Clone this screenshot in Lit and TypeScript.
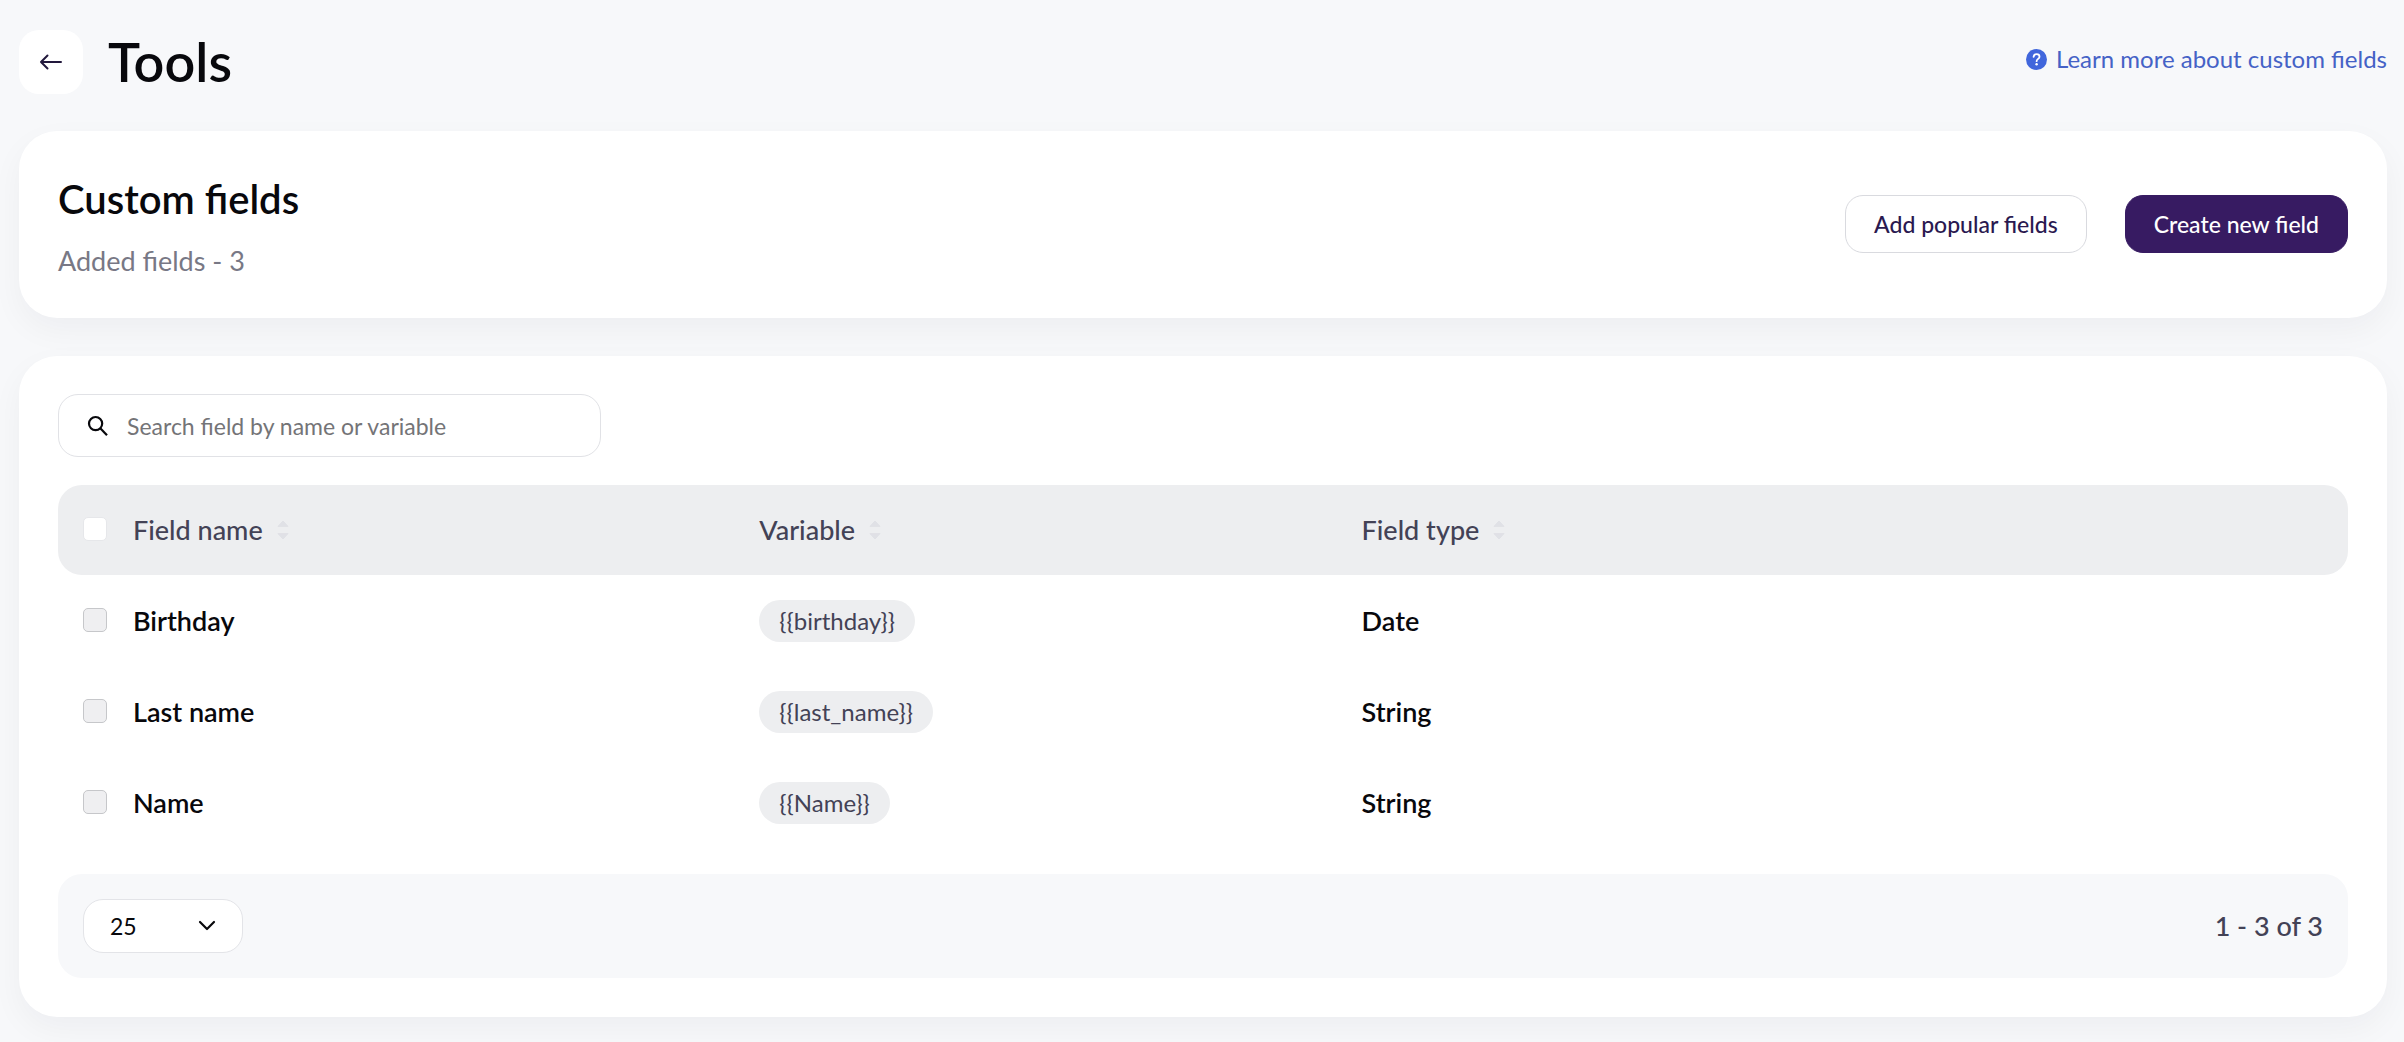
import { LitElement, html, css, svg } from "lit";
import { customElement, state } from "lit/decorators.js";

interface Field {
  name: string;
  variable: string;
  type: string;
}

const FIELDS: Field[] = [
  { name: "Birthday", variable: "{{birthday}}", type: "Date" },
  { name: "Last name", variable: "{{last_name}}", type: "String" },
  { name: "Name", variable: "{{Name}}", type: "String" },
];

const COLUMNS = ["Field name", "Variable", "Field type"];

const sortIcon = html`<svg class="sort-icon" width="12" height="20" viewBox="0 0 12 20" aria-hidden="true">
  ${svg`<path d="M6 1 11 6.4H1z"></path><path d="M6 19 1 13.6H11z"></path>`}
</svg>`;

@customElement("app-root")
export class AppRoot extends LitElement {
  @state() private query = "";

  static styles = css`
    :host {
      display: block;
      box-sizing: border-box;
      min-height: 100vh;
      padding: 30px 17px 25px 19px;
      background: #f7f8fa;
      color: #08080c;
      font-family: Lato, "Open Sans", sans-serif;
      font-size: 27px;
      line-height: 36px;
    }
    *,
    *::before,
    *::after {
      box-sizing: border-box;
    }
    button,
    input,
    select {
      margin: 0;
      font: inherit;
      color: inherit;
    }
    .header {
      display: flex;
      align-items: center;
      gap: 25px;
      margin-bottom: 37px;
    }
    .back {
      display: grid;
      place-items: center;
      width: 64px;
      height: 64px;
      padding: 0;
      border: 0;
      border-radius: 20px;
      background: #fff;
      color: #22183c;
    }
    .title {
      flex: 1;
      margin: 0;
      font-size: 54px;
      line-height: 64px;
      font-weight: 600;
    }
    .help {
      display: flex;
      align-items: center;
      gap: 9px;
      padding-bottom: 6px;
      color: #4562c6;
      font-size: 24px;
      text-decoration: none;
    }
    .card {
      padding: 38px 39px 39px;
      border-radius: 38px;
      background: #fff;
      box-shadow: 0 12px 32px rgba(20, 30, 50, 0.045);
    }
    .summary {
      display: flex;
      align-items: center;
      gap: 38px;
      margin-bottom: 38px;
    }
    .summary-text {
      display: flex;
      flex: 1;
      flex-direction: column;
      gap: 14px;
    }
    .subtitle {
      margin: 0;
      font-size: 40px;
      line-height: 60px;
      font-weight: 600;
    }
    .count {
      margin: 0;
      color: #787885;
    }
    .button {
      height: 58px;
      padding: 0 28px;
      border: 1px solid #d9dadf;
      border-radius: 18px;
      background: #fff;
      color: #2a1950;
      font-size: 23px;
      font-weight: 500;
    }
    .button-primary {
      border-color: #371b62;
      background: #371b62;
      color: #fff;
    }
    .search {
      display: flex;
      align-items: center;
      gap: 18px;
      width: 543px;
      max-width: 100%;
      height: 63px;
      margin-bottom: 28px;
      padding: 0 28px;
      border: 1px solid #e1e2e6;
      border-radius: 20px;
    }
    .search-input {
      flex: 1;
      min-width: 0;
      padding: 0;
      border: 0;
      outline: 0;
      background: none;
      font-size: 23px;
    }
    .search-input::placeholder {
      color: #747477;
      opacity: 1;
    }
    .table {
      width: 100%;
      border-spacing: 0;
      table-layout: fixed;
      text-align: left;
    }
    .col-check {
      width: 75px;
    }
    .col-name {
      width: 27.35%;
    }
    .col-variable {
      width: 26.3%;
    }
    .head-cell {
      height: 90px;
      padding: 0;
      background: #edeef0;
      color: #434256;
      font-weight: 500;
    }
    .head-cell:first-child {
      border-radius: 24px 0 0 24px;
    }
    .head-cell:last-child {
      border-radius: 0 24px 24px 0;
    }
    .cell {
      height: 91px;
      padding: 0;
      font-weight: 600;
    }
    .cell.check-cell,
    .head-cell.check-cell {
      padding: 0 0 2px 25px;
    }
    .check {
      display: block;
      appearance: none;
      width: 24px;
      height: 24px;
      border: 1px solid #c6c7ca;
      border-radius: 5px;
      background: #efeff1;
    }
    .check-all {
      border-color: #e6e7ea;
      background: #fff;
    }
    .check:checked {
      background: #371b62;
    }
    .sort {
      display: inline-flex;
      align-items: center;
      gap: 14px;
      padding: 0;
      border: 0;
      background: none;
    }
    .sort-icon {
      fill: #e0e1e6;
      stroke: #e0e1e6;
      stroke-width: 1;
      stroke-linejoin: round;
    }
    .tag {
      display: inline-block;
      padding: 0 20px;
      border-radius: 21px;
      background: #edeef0;
      color: #434256;
      font-size: 24px;
      line-height: 42px;
      font-weight: 400;
      vertical-align: middle;
    }
    .footer {
      display: flex;
      align-items: center;
      justify-content: space-between;
      height: 104px;
      margin-top: 26px;
      padding: 0 25px;
      border-radius: 24px;
      background: #f7f8fa;
      color: #434256;
    }
    .page-size {
      display: grid;
      align-items: center;
      width: 160px;
      color: #08080c;
    }
    .page-select {
      grid-area: 1 / 1;
      appearance: none;
      width: 100%;
      height: 54px;
      padding: 0 26px;
      border: 1px solid #e3e4e8;
      border-radius: 20px;
      background: #fff;
      font-size: 23px;
    }
    .page-arrow {
      grid-area: 1 / 1;
      justify-self: end;
      margin-right: 27px;
      pointer-events: none;
    }
    .range {
      margin: 0;
      font-weight: 500;
    }
  `;

  private onSearch(event: Event) {
    this.query = (event.target as HTMLInputElement).value;
  }

  private get visibleFields() {
    const query = this.query.trim().toLowerCase();
    return FIELDS.filter((field) => `${field.name} ${field.variable}`.toLowerCase().includes(query));
  }

  private renderRow(field: Field) {
    return html`<tr>
      <td class="cell check-cell"><input class="check" type="checkbox" aria-label=${field.name} /></td>
      <td class="cell">${field.name}</td>
      <td class="cell"><span class="tag">${field.variable}</span></td>
      <td class="cell">${field.type}</td>
    </tr>`;
  }

  render() {
    return html`
      <header class="header">
        <button class="back" type="button" aria-label="Back">
          <svg width="24" height="18" viewBox="0 0 24 18" fill="none" stroke="currentColor" stroke-width="2" stroke-linecap="round" stroke-linejoin="round">
            <path d="M22 9H2M8.5 2.5 2 9l6.5 6.5"></path>
          </svg>
        </button>
        <h1 class="title">Tools</h1>
        <a class="help" href="#custom-fields">
          <svg width="21" height="21" viewBox="0 0 21 21" aria-hidden="true">
            <circle cx="10.5" cy="10.5" r="10.5" fill="#4066dc"></circle>
            <path d="M7.6 7.9c.2-1.7 1.3-2.7 3-2.7s2.9 1 2.9 2.5c0 2.1-2.9 2.2-2.9 4.5" fill="none" stroke="#fff" stroke-width="1.8" stroke-linecap="round"></path>
            <circle cx="10.6" cy="15.3" r="1.2" fill="#fff"></circle>
          </svg>
          Learn more about custom fields
        </a>
      </header>

      <section class="card summary" id="custom-fields">
        <div class="summary-text">
          <h2 class="subtitle">Custom fields</h2>
          <p class="count">Added fields - ${FIELDS.length}</p>
        </div>
        <button class="button" type="button">Add popular fields</button>
        <button class="button button-primary" type="button">Create new field</button>
      </section>

      <section class="card">
        <label class="search">
          <svg width="22" height="22" viewBox="0 0 22 22" fill="none" stroke="#08080c" stroke-width="2.2" aria-hidden="true">
            <circle cx="8.6" cy="8.6" r="6.6"></circle>
            <path d="M13.3 13.3 20 20.2"></path>
          </svg>
          <input
            class="search-input"
            type="text"
            aria-label="Search field by name or variable"
            placeholder="Search field by name or variable"
            .value=${this.query}
            @input=${this.onSearch}
          />
        </label>

        <table class="table">
          <colgroup>
            <col class="col-check" />
            <col class="col-name" />
            <col class="col-variable" />
            <col />
          </colgroup>
          <thead>
            <tr>
              <th class="head-cell check-cell"><input class="check check-all" type="checkbox" aria-label="Select all" /></th>
              ${COLUMNS.map(
                (column) => html`<th class="head-cell"><button class="sort" type="button">${column}${sortIcon}</button></th>`
              )}
            </tr>
          </thead>
          <tbody>
            ${this.visibleFields.map((field) => this.renderRow(field))}
          </tbody>
        </table>

        <footer class="footer">
          <div class="page-size">
            <select class="page-select" aria-label="Rows per page">
              <option selected>25</option>
              <option>50</option>
              <option>100</option>
            </select>
            <svg class="page-arrow" width="18" height="12" viewBox="0 0 18 12" fill="none" stroke="#08080c" stroke-width="2.2" stroke-linecap="round" stroke-linejoin="round" aria-hidden="true">
              <path d="M2 2l7 7 7-7"></path>
            </svg>
          </div>
          <p class="range">1 - 3 of 3</p>
        </footer>
      </section>
    `;
  }
}
